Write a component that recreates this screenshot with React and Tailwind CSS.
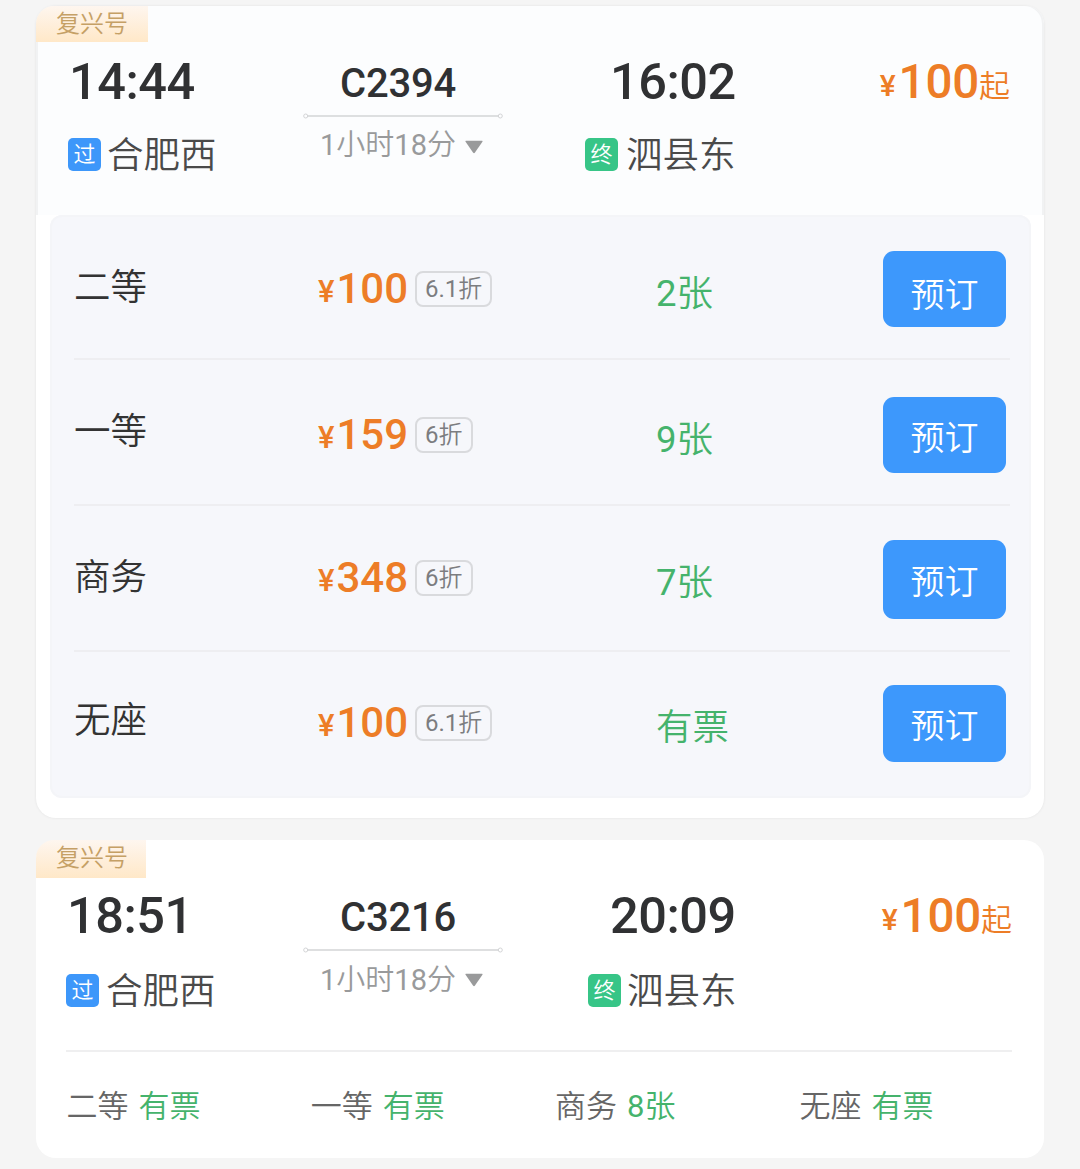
import clsx from 'clsx'

const seats = [
  { name: '二等', price: 100, discount: '6.1折', left: '2张', row: 'h-[145px] pt-[36px]', label: 'mt-[19px]', btn: 'h-[76px] pt-[12px]' },
  { name: '一等', price: 159, discount: '6折', left: '9张', row: 'h-[146px] pt-[37px]', label: 'mt-[17px]', btn: 'h-[76px] pt-[9px]' },
  { name: '商务', price: 348, discount: '6折', left: '7张', row: 'h-[146px] pt-[34px]', label: 'mt-[20px]', btn: 'h-[79px] pt-[10px]' },
  { name: '无座', price: 100, discount: '6.1折', left: '有票', row: 'h-[146px] pt-[33px]', label: 'mt-[18px]', btn: 'h-[77px] pt-[9px]' },
]

const summary = [
  { name: '二等', left: '有票' },
  { name: '一等', left: '有票' },
  { name: '商务', left: '8张' },
  { name: '无座', left: '有票' },
]

// Digits keep the regular weight inside the lighter Chinese text
function MixedText({ text }) {
  return text.split(/([\d.]+)/).map((part, i) => (
    <span key={i} className={i % 2 ? 'font-normal' : 'font-[350]'}>
      {part}
    </span>
  ))
}

function StationBadge({ text, color }) {
  return (
    <span className={clsx('flex h-[33px] w-[33px] shrink-0 justify-center rounded-[5px] text-[22px] leading-[34px] font-[350] text-white', color)}>
      {text}
    </span>
  )
}

function RouteLine() {
  return (
    <svg width="200" height="6" viewBox="0 0 200 6" fill="none" stroke="#d3d4d6">
      <path d="M5 3H195" strokeWidth="1.3" />
      <circle cx="2.7" cy="3" r="2" />
      <circle cx="197.3" cy="3" r="2" />
    </svg>
  )
}

function TrainHeader({ train, compact }) {
  return (
    <div className={clsx('flex', compact ? 'h-[210px]' : 'h-[209px]')}>
      {/* Departure */}
      <div className="w-[267px]">
        <div
          className={clsx(
            'rounded-tl-[18px] bg-linear-to-b from-[#fef6ef] to-[#ffe8c8] pl-[20px] text-[24px] font-[350] text-[#c5a065]',
            compact ? 'h-[38px] w-[110px] leading-[37px]' : 'h-[36px] w-[112px] leading-[37px]'
          )}
        >
          复兴号
        </div>
        <div
          className={clsx(
            'text-[50.5px] leading-[52px] font-medium tracking-[-0.5px] text-[#303133]',
            compact ? 'mt-[12px] pl-[31px]' : 'mt-[14px] pl-[33px]'
          )}
        >
          {train.depart}
        </div>
        <div className={clsx('flex items-center', compact ? 'mt-[29px] gap-[7px] pl-[30px]' : 'mt-[27px] gap-[6px] pl-[32px]')}>
          <StationBadge text="过" color="bg-[#3d97fa]" />
          <span className="pt-[3px] text-[36.5px] leading-[36px] font-[350] text-[#4a4a4a]">{train.from}</span>
        </div>
      </div>

      {/* Train number and duration */}
      <div className="w-[200px] pt-[58px]">
        <div className="pl-[37px] text-[40px] leading-[40px] font-medium tracking-[-0.2px] text-[#303133]">{train.number}</div>
        <div className="mt-[9px]">
          <RouteLine />
        </div>
        <div className={clsx('flex items-center pl-[17px] text-[#999a9b]', compact ? 'mt-[11px]' : 'mt-[10px]')}>
          <span className="w-[145px] text-[29px] leading-[32px] whitespace-nowrap">
            <MixedText text={train.duration} />
          </span>
          <svg className={compact ? '-mt-[1px]' : 'mt-[3px]'} width="18" height="14" viewBox="0 0 18 14">
            <path d="M1 .8H17Q18 .8 17.4 1.8L10 12.6Q9 14 8 12.6L.6 1.8Q0 .8 1 .8Z" fill="currentColor" />
          </svg>
        </div>
      </div>

      {/* Arrival */}
      <div className={clsx('w-[286px] pt-[50px]', compact ? 'pl-[85px]' : 'pl-[82px]')}>
        <div
          className={clsx(
            'text-[50.5px] leading-[52px] font-medium tracking-[-0.5px] text-[#303133]',
            compact ? 'pl-[22px]' : 'pl-[25px]'
          )}
        >
          {train.arrive}
        </div>
        <div className={clsx('flex items-center', compact ? 'mt-[29px] gap-[6px]' : 'mt-[27px] gap-[8px]')}>
          <StationBadge text="终" color="bg-[#37c587]" />
          <span className="pt-[3px] text-[36.5px] leading-[36px] font-[350] whitespace-nowrap text-[#4a4a4a]">{train.to}</span>
        </div>
      </div>

      {/* Lowest price */}
      <div
        className={clsx(
          'flex flex-1 items-start justify-end pt-[50px] leading-[52px] text-[#ed7d27]',
          compact ? 'pr-[32px]' : 'pr-[34px]'
        )}
      >
        <span className="mr-[3px] pt-[4px] text-[30px] font-medium">¥</span>
        <span className="text-[47.5px] font-medium tracking-[-0.2px]">{train.price}</span>
        <span className="pt-[5px] text-[31px] font-[350]">起</span>
      </div>
    </div>
  )
}

function SeatRow({ seat, last }) {
  return (
    <div className={clsx('flex items-start', seat.row, !last && 'border-b-2 border-[#eeeef1]')}>
      <div className={clsx('w-[244px] text-[36.5px] leading-[36px] font-[350] text-[#333]', seat.label)}>{seat.name}</div>
      <div className="flex w-[338px] items-start text-[#ed7d27]">
        <div className="mt-[14px] flex w-[97px] items-start leading-[48px] font-medium">
          <span className="mr-[2px] pt-[3px] text-[31px]">¥</span>
          <span className="text-[42px]">{seat.price}</span>
        </div>
        <span className="mt-[20px] h-[36px] rounded-[8px] border-2 border-[#d9dadd] px-[8px] text-[24px] leading-[32px] text-[#7c7d80]">
          <MixedText text={seat.discount} />
        </span>
      </div>
      <div className="mt-[25px] w-[227px] text-[36.5px] leading-[36px] text-[#45b36c]">
        <MixedText text={seat.left} />
      </div>
      <button className={clsx('flex w-[123px] justify-center rounded-[11px] bg-[#3d98fc] text-[34px] leading-[64px] font-[350] text-white', seat.btn)}>
        预订
      </button>
    </div>
  )
}

function App() {
  return (
    <div className="h-[1169px] overflow-hidden bg-[#f5f5f5] px-[36px] pt-[6px] font-['Roboto','Noto_Sans_CJK_SC',sans-serif]">
      {/* Expanded train */}
      <div className="h-[812px] rounded-[20px] bg-white shadow-[0_0_3px_rgba(0,0,0,0.08)]">
        <div className="rounded-t-[18px] bg-[#fcfdfe] shadow-[inset_2px_0_0_#f1f2f3,inset_-2px_0_0_#f1f2f3]">
          <TrainHeader
            train={{ depart: '14:44', from: '合肥西', number: 'C2394', duration: '1小时18分', arrive: '16:02', to: '泗县东', price: 100 }}
          />
        </div>
        <div className="ml-[14px] h-[583px] w-[981px] rounded-[12px] bg-[#f6f7fb] pr-[21px] pl-[24px] shadow-[inset_0_0_0_2px_#f4f5f8]">
          {seats.map((seat, i) => (
            <SeatRow key={seat.name} seat={seat} last={i === seats.length - 1} />
          ))}
        </div>
      </div>

      {/* Collapsed train */}
      <div className="mt-[22px] h-[318px] rounded-[20px] bg-white">
        <TrainHeader
          compact
          train={{ depart: '18:51', from: '合肥西', number: 'C3216', duration: '1小时18分', arrive: '20:09', to: '泗县东', price: 100 }}
        />
        <div className="mr-[32px] ml-[30px] flex border-t-2 border-[#efeff0] pt-[37px] text-[31px] leading-[36px]">
          {summary.map((item) => (
            <div key={item.name} className="flex w-[244.3px] shrink-0 gap-[10px] pl-[0.5px]">
              <span className="font-[350] text-[#666]">{item.name}</span>
              <span className="text-[#45b36c]">
                <MixedText text={item.left} />
              </span>
            </div>
          ))}
        </div>
      </div>
    </div>
  )
}

export default App
